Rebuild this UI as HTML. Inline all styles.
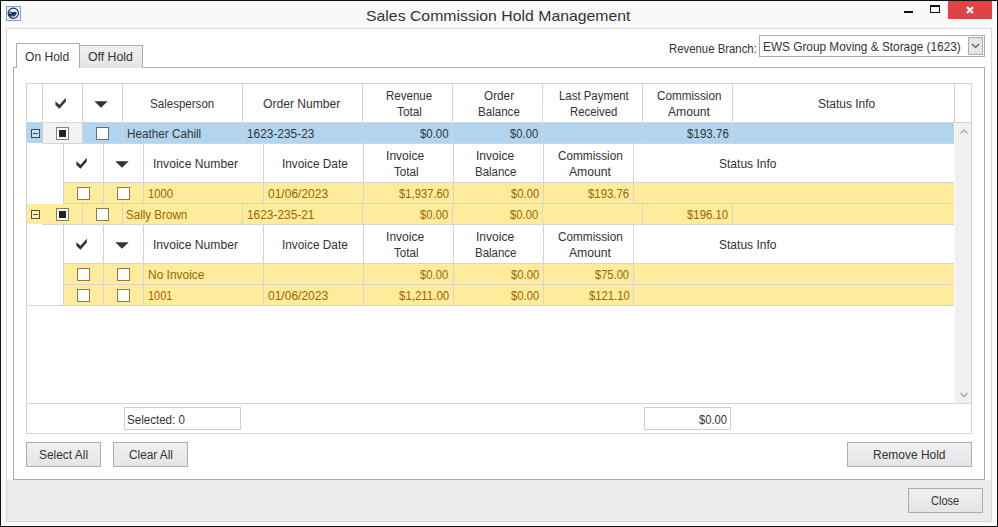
<!DOCTYPE html><html><head><meta charset="utf-8"><style>
html,body{margin:0;padding:0;} body{width:998px;height:527px;position:relative;overflow:hidden;background:#f9f9f9;font-family:"Liberation Sans", sans-serif;font-size:12px;color:#333;}
div{box-sizing:border-box;}
</style></head><body>
<div style="position:absolute;left:0px;top:0px;width:998px;height:527px;border:1px solid #111;"></div>
<svg style="position:absolute;left:6px;top:6px" width="15" height="15" viewBox="0 0 15 15"><rect x="0.5" y="0.5" width="14" height="14" fill="#e9eef5" stroke="#8aa0bd"/><circle cx="7.3" cy="7.3" r="5.2" fill="#eef2f8" stroke="#143666" stroke-width="1.1"/><path d="M2.9 5.8 L5.2 5.6 L6.2 6.2 L9 5.8 L10.5 6.3 L10.7 7.7 L9.4 9 L9 10.1 L7.5 11.3 L4.8 11.9 L2.9 10.1 L2.2 7.9 Z" fill="#143666"/><path d="M3.1 7.1 L5.6 7.1 M4.6 10.3 L7.9 10.3" stroke="#e9eef5" stroke-width="0.8"/></svg>
<div style="position:absolute;left:366.45px;top:5.5px;line-height:20px;white-space:nowrap;font-size:15px;transform:scaleX(1.0540);transform-origin:0 0;color:#333">Sales Commission Hold Management</div>
<div style="position:absolute;left:904px;top:11px;width:9px;height:2px;background:#111"></div>
<div style="position:absolute;left:930px;top:5px;width:10px;height:8px;border:1px solid #111;border-top-width:2px"></div>
<div style="position:absolute;left:948px;top:1px;width:44px;height:18px;background:#e04343"></div>
<svg style="position:absolute;left:965px;top:5px" width="10" height="10" viewBox="0 0 10 10"><path d="M2 2 L8 8 M8 2 L2 8" stroke="#fff" stroke-width="2.2"/></svg>
<div style="position:absolute;left:6px;top:28px;width:986px;height:494px;border:1px solid #d9d9d9;background:#ececec"></div>
<div style="position:absolute;left:7px;top:29px;width:984px;height:451px;background:#fff"></div>
<div style="position:absolute;left:13px;top:67px;width:972px;height:413px;border:1px solid #acacac;background:#fff"></div>
<div style="position:absolute;left:79px;top:45px;width:64px;height:23px;border:1px solid #acacac;border-bottom:none;background:linear-gradient(#f0f0f0,#e5e5e5)"></div>
<div style="position:absolute;left:16px;top:43px;width:64px;height:25px;border:1px solid #acacac;border-bottom:none;background:#fff"></div>
<div style="position:absolute;left:25.20px;top:49px;line-height:16px;white-space:nowrap;font-size:12px;transform:scaleX(1.0045);transform-origin:0 0;color:#333">On Hold</div>
<div style="position:absolute;left:88.10px;top:49px;line-height:16px;white-space:nowrap;font-size:12px;transform:scaleX(1.0250);transform-origin:0 0;color:#333">Off Hold</div>
<div style="position:absolute;left:668.65px;top:41px;line-height:16px;white-space:nowrap;font-size:12px;transform:scaleX(0.9473);transform-origin:0 0;color:#333">Revenue Branch:</div>
<div style="position:absolute;left:759px;top:35px;width:226px;height:22px;border:1px solid #acacac;background:#fff"></div>
<div style="position:absolute;left:763.22px;top:39px;line-height:16px;white-space:nowrap;font-size:12px;transform:scaleX(0.9849);transform-origin:0 0;color:#333">EWS Group Moving &amp; Storage (1623)</div>
<div style="position:absolute;left:968px;top:37px;width:15px;height:18px;border:1px solid #acacac;background:#e6e6e6"></div>
<svg style="position:absolute;left:968px;top:37px" width="15" height="18" viewBox="0 0 15 18"><path d="M4 7 L7.5 10.5 L11 7" stroke="#555" stroke-width="1.2" fill="none"/></svg>
<div style="position:absolute;left:26px;top:83px;width:946px;height:351px;border:1px solid #d5d5d5;background:#fff"></div>
<div style="position:absolute;left:27px;top:122px;width:944px;height:1px;background:#d5d5d5"></div>
<div style="position:absolute;left:42px;top:84px;width:1px;height:38px;background:#d5d5d5"></div>
<div style="position:absolute;left:82px;top:84px;width:1px;height:38px;background:#d5d5d5"></div>
<div style="position:absolute;left:122px;top:84px;width:1px;height:38px;background:#d5d5d5"></div>
<div style="position:absolute;left:242px;top:84px;width:1px;height:38px;background:#d5d5d5"></div>
<div style="position:absolute;left:362px;top:84px;width:1px;height:38px;background:#d5d5d5"></div>
<div style="position:absolute;left:452px;top:84px;width:1px;height:38px;background:#d5d5d5"></div>
<div style="position:absolute;left:542px;top:84px;width:1px;height:38px;background:#d5d5d5"></div>
<div style="position:absolute;left:642px;top:84px;width:1px;height:38px;background:#d5d5d5"></div>
<div style="position:absolute;left:732px;top:84px;width:1px;height:38px;background:#d5d5d5"></div>
<div style="position:absolute;left:954px;top:84px;width:1px;height:38px;background:#d5d5d5"></div>
<svg style="position:absolute;left:55px;top:97px" width="12" height="12" viewBox="0 0 12 12"><path d="M0.4 4.2 L4.5 7.7 L10.8 0.7 L10.8 4.6 L4.5 11.7 L0.4 8.1 Z" fill="#333"/></svg>
<svg style="position:absolute;left:94px;top:101px" width="14" height="8" viewBox="0 0 14 8"><path d="M0.3 0.2 L13.7 0.2 L7 6.8 Z" fill="#333"/></svg>
<div style="position:absolute;left:149.64px;top:96px;line-height:16px;white-space:nowrap;font-size:12px;transform:scaleX(0.9631);transform-origin:0 0;color:#333">Salesperson</div>
<div style="position:absolute;left:263.30px;top:96px;line-height:16px;white-space:nowrap;font-size:12px;transform:scaleX(1.0078);transform-origin:0 0;color:#333">Order Number</div>
<div style="position:absolute;left:386.14px;top:88px;line-height:16px;white-space:nowrap;font-size:12px;transform:scaleX(0.9596);transform-origin:0 0;color:#333">Revenue</div>
<div style="position:absolute;left:397.10px;top:104px;line-height:16px;white-space:nowrap;font-size:12px;transform:scaleX(0.9840);transform-origin:0 0;color:#333">Total</div>
<div style="position:absolute;left:484.30px;top:88px;line-height:16px;white-space:nowrap;font-size:12px;transform:scaleX(0.9806);transform-origin:0 0;color:#333">Order</div>
<div style="position:absolute;left:478.24px;top:104px;line-height:16px;white-space:nowrap;font-size:12px;transform:scaleX(0.9643);transform-origin:0 0;color:#333">Balance</div>
<div style="position:absolute;left:559.05px;top:88px;line-height:16px;white-space:nowrap;font-size:12px;transform:scaleX(0.9507);transform-origin:0 0;color:#333">Last Payment</div>
<div style="position:absolute;left:570.35px;top:104px;line-height:16px;white-space:nowrap;font-size:12px;transform:scaleX(0.9469);transform-origin:0 0;color:#333">Received</div>
<div style="position:absolute;left:657.20px;top:88px;line-height:16px;white-space:nowrap;font-size:12px;transform:scaleX(0.9758);transform-origin:0 0;color:#333">Commission</div>
<div style="position:absolute;left:668.30px;top:104px;line-height:16px;white-space:nowrap;font-size:12px;transform:scaleX(1.0119);transform-origin:0 0;color:#333">Amount</div>
<div style="position:absolute;left:817.90px;top:96px;line-height:16px;white-space:nowrap;font-size:12px;transform:scaleX(0.9982);transform-origin:0 0;color:#333">Status Info</div>
<div style="position:absolute;left:955px;top:123px;width:16px;height:280px;background:#f0f0f0"></div>
<svg style="position:absolute;left:955.5px;top:123px" width="16" height="16" viewBox="0 0 16 16"><path d="M4.5 10.5 L8 7 L11.5 10.5" stroke="#a6a6a6" stroke-width="1.3" fill="none"/></svg>
<svg style="position:absolute;left:955.5px;top:387px" width="16" height="16" viewBox="0 0 16 16"><path d="M4.5 6 L8 9.5 L11.5 6" stroke="#a6a6a6" stroke-width="1.3" fill="none"/></svg>
<div style="position:absolute;left:27px;top:123px;width:927px;height:20px;background:#b2d5ef"></div>
<div style="position:absolute;left:43px;top:123px;width:39px;height:20px;background:#f2f2f2"></div>
<div style="position:absolute;left:42px;top:143px;width:912px;height:1px;background:#d5d5d5"></div>
<div style="position:absolute;left:82px;top:123px;width:1px;height:20px;background:#d5d5d5"></div>
<div style="position:absolute;left:122px;top:123px;width:1px;height:20px;background:#d5d5d5"></div>
<div style="position:absolute;left:242px;top:123px;width:1px;height:20px;background:#d5d5d5"></div>
<div style="position:absolute;left:362px;top:123px;width:1px;height:20px;background:#d5d5d5"></div>
<div style="position:absolute;left:452px;top:123px;width:1px;height:20px;background:#d5d5d5"></div>
<div style="position:absolute;left:542px;top:123px;width:1px;height:20px;background:#d5d5d5"></div>
<div style="position:absolute;left:642px;top:123px;width:1px;height:20px;background:#d5d5d5"></div>
<div style="position:absolute;left:732px;top:123px;width:1px;height:20px;background:#d5d5d5"></div>
<div style="position:absolute;left:31px;top:129px;width:9px;height:9px;border:1px solid rgba(0,0,0,0.66);background:rgba(255,255,255,0.3);background-clip:padding-box"></div>
<div style="position:absolute;left:33px;top:133px;width:5px;height:1px;background:rgba(0,0,0,0.66)"></div>
<div style="position:absolute;left:56px;top:127px;width:13px;height:13px;border:1px solid rgba(0,0,0,0.47);background:#fff;background-clip:padding-box"></div>
<div style="position:absolute;left:59px;top:130px;width:7px;height:7px;background:#222"></div>
<div style="position:absolute;left:96px;top:127px;width:13px;height:13px;border:1px solid rgba(0,0,0,0.47);background:#fff;background-clip:padding-box"></div>
<div style="position:absolute;left:126.52px;top:126px;line-height:16px;white-space:nowrap;font-size:12px;transform:scaleX(0.9760);transform-origin:0 0;color:#333">Heather Cahill</div>
<div style="position:absolute;left:246.81px;top:126px;line-height:16px;white-space:nowrap;font-size:12px;transform:scaleX(0.9896);transform-origin:0 0;color:#333">1623-235-23</div>
<div style="position:absolute;left:419.80px;top:126px;line-height:16px;white-space:nowrap;font-size:12px;transform:scaleX(0.9500);transform-origin:0 0;color:#333">$0.00</div>
<div style="position:absolute;left:509.70px;top:126px;line-height:16px;white-space:nowrap;font-size:12px;transform:scaleX(0.9367);transform-origin:0 0;color:#333">$0.00</div>
<div style="position:absolute;left:686.70px;top:126px;line-height:16px;white-space:nowrap;font-size:12px;transform:scaleX(0.9651);transform-origin:0 0;color:#333">$193.76</div>
<div style="position:absolute;left:63px;top:144px;width:1px;height:38px;background:#c9d3e3"></div>
<div style="position:absolute;left:63px;top:182px;width:891px;height:1px;background:#d5d5d5"></div>
<div style="position:absolute;left:103px;top:144px;width:1px;height:38px;background:#d5d5d5"></div>
<div style="position:absolute;left:143px;top:144px;width:1px;height:38px;background:#d5d5d5"></div>
<div style="position:absolute;left:263px;top:144px;width:1px;height:38px;background:#d5d5d5"></div>
<div style="position:absolute;left:363px;top:144px;width:1px;height:38px;background:#d5d5d5"></div>
<div style="position:absolute;left:453px;top:144px;width:1px;height:38px;background:#d5d5d5"></div>
<div style="position:absolute;left:543px;top:144px;width:1px;height:38px;background:#d5d5d5"></div>
<div style="position:absolute;left:633px;top:144px;width:1px;height:38px;background:#d5d5d5"></div>
<svg style="position:absolute;left:76px;top:157px" width="12" height="12" viewBox="0 0 12 12"><path d="M0.4 4.2 L4.5 7.7 L10.8 0.7 L10.8 4.6 L4.5 11.7 L0.4 8.1 Z" fill="#333"/></svg>
<svg style="position:absolute;left:115px;top:161px" width="14" height="8" viewBox="0 0 14 8"><path d="M0.3 0.2 L13.7 0.2 L7 6.8 Z" fill="#333"/></svg>
<div style="position:absolute;left:152.79px;top:156px;line-height:16px;white-space:nowrap;font-size:12px;transform:scaleX(1.0108);transform-origin:0 0;color:#333">Invoice Number</div>
<div style="position:absolute;left:281.81px;top:156px;line-height:16px;white-space:nowrap;font-size:12px;transform:scaleX(0.9864);transform-origin:0 0;color:#333">Invoice Date</div>
<div style="position:absolute;left:386.10px;top:148px;line-height:16px;white-space:nowrap;font-size:12px;transform:scaleX(1.0000);transform-origin:0 0;color:#333">Invoice</div>
<div style="position:absolute;left:393.80px;top:164px;line-height:16px;white-space:nowrap;font-size:12px;transform:scaleX(0.9720);transform-origin:0 0;color:#333">Total</div>
<div style="position:absolute;left:476.00px;top:148px;line-height:16px;white-space:nowrap;font-size:12px;transform:scaleX(1.0027);transform-origin:0 0;color:#333">Invoice</div>
<div style="position:absolute;left:474.75px;top:164px;line-height:16px;white-space:nowrap;font-size:12px;transform:scaleX(0.9548);transform-origin:0 0;color:#333">Balance</div>
<div style="position:absolute;left:558.00px;top:148px;line-height:16px;white-space:nowrap;font-size:12px;transform:scaleX(0.9803);transform-origin:0 0;color:#333">Commission</div>
<div style="position:absolute;left:569.30px;top:164px;line-height:16px;white-space:nowrap;font-size:12px;transform:scaleX(1.0143);transform-origin:0 0;color:#333">Amount</div>
<div style="position:absolute;left:718.90px;top:156px;line-height:16px;white-space:nowrap;font-size:12px;transform:scaleX(1.0018);transform-origin:0 0;color:#333">Status Info</div>
<div style="position:absolute;left:63px;top:183px;width:1px;height:21px;background:#c9d3e3"></div>
<div style="position:absolute;left:64px;top:183px;width:890px;height:20px;background:#ffeb9c"></div>
<div style="position:absolute;left:64px;top:203px;width:890px;height:1px;background:#d5d5d5"></div>
<div style="position:absolute;left:103px;top:183px;width:1px;height:20px;background:#d5d5d5"></div>
<div style="position:absolute;left:143px;top:183px;width:1px;height:20px;background:#d5d5d5"></div>
<div style="position:absolute;left:263px;top:183px;width:1px;height:20px;background:#d5d5d5"></div>
<div style="position:absolute;left:363px;top:183px;width:1px;height:20px;background:#d5d5d5"></div>
<div style="position:absolute;left:453px;top:183px;width:1px;height:20px;background:#d5d5d5"></div>
<div style="position:absolute;left:543px;top:183px;width:1px;height:20px;background:#d5d5d5"></div>
<div style="position:absolute;left:633px;top:183px;width:1px;height:20px;background:#d5d5d5"></div>
<div style="position:absolute;left:77px;top:187px;width:13px;height:13px;border:1px solid rgba(0,0,0,0.47);background:#fff;background-clip:padding-box"></div>
<div style="position:absolute;left:117px;top:187px;width:13px;height:13px;border:1px solid rgba(0,0,0,0.47);background:#fff;background-clip:padding-box"></div>
<div style="position:absolute;left:147.86px;top:186px;line-height:16px;white-space:nowrap;font-size:12px;transform:scaleX(0.9423);transform-origin:0 0;color:#9c6500">1000</div>
<div style="position:absolute;left:268.30px;top:186px;line-height:16px;white-space:nowrap;font-size:12px;transform:scaleX(1.0017);transform-origin:0 0;color:#9c6500">01/06/2023</div>
<div style="position:absolute;left:398.80px;top:186px;line-height:16px;white-space:nowrap;font-size:12px;transform:scaleX(0.9377);transform-origin:0 0;color:#9c6500">$1,937.60</div>
<div style="position:absolute;left:510.60px;top:186px;line-height:16px;white-space:nowrap;font-size:12px;transform:scaleX(0.9367);transform-origin:0 0;color:#9c6500">$0.00</div>
<div style="position:absolute;left:588.20px;top:186px;line-height:16px;white-space:nowrap;font-size:12px;transform:scaleX(0.9465);transform-origin:0 0;color:#9c6500">$193.76</div>
<div style="position:absolute;left:27px;top:204px;width:927px;height:20px;background:#ffeb9c"></div>
<div style="position:absolute;left:42px;top:224px;width:912px;height:1px;background:#d5d5d5"></div>
<div style="position:absolute;left:82px;top:204px;width:1px;height:20px;background:#d5d5d5"></div>
<div style="position:absolute;left:122px;top:204px;width:1px;height:20px;background:#d5d5d5"></div>
<div style="position:absolute;left:242px;top:204px;width:1px;height:20px;background:#d5d5d5"></div>
<div style="position:absolute;left:362px;top:204px;width:1px;height:20px;background:#d5d5d5"></div>
<div style="position:absolute;left:452px;top:204px;width:1px;height:20px;background:#d5d5d5"></div>
<div style="position:absolute;left:542px;top:204px;width:1px;height:20px;background:#d5d5d5"></div>
<div style="position:absolute;left:642px;top:204px;width:1px;height:20px;background:#d5d5d5"></div>
<div style="position:absolute;left:732px;top:204px;width:1px;height:20px;background:#d5d5d5"></div>
<div style="position:absolute;left:31px;top:210px;width:9px;height:9px;border:1px solid rgba(0,0,0,0.66);background:rgba(255,255,255,0.3);background-clip:padding-box"></div>
<div style="position:absolute;left:33px;top:214px;width:5px;height:1px;background:rgba(0,0,0,0.66)"></div>
<div style="position:absolute;left:56px;top:208px;width:13px;height:13px;border:1px solid rgba(0,0,0,0.47);background:#fff;background-clip:padding-box"></div>
<div style="position:absolute;left:59px;top:211px;width:7px;height:7px;background:#222"></div>
<div style="position:absolute;left:96px;top:208px;width:13px;height:13px;border:1px solid rgba(0,0,0,0.47);background:#fff;background-clip:padding-box"></div>
<div style="position:absolute;left:126.23px;top:207px;line-height:16px;white-space:nowrap;font-size:12px;transform:scaleX(0.9661);transform-origin:0 0;color:#9c6500">Sally Brown</div>
<div style="position:absolute;left:246.71px;top:207px;line-height:16px;white-space:nowrap;font-size:12px;transform:scaleX(0.9910);transform-origin:0 0;color:#9c6500">1623-235-21</div>
<div style="position:absolute;left:419.70px;top:207px;line-height:16px;white-space:nowrap;font-size:12px;transform:scaleX(0.9367);transform-origin:0 0;color:#9c6500">$0.00</div>
<div style="position:absolute;left:509.90px;top:207px;line-height:16px;white-space:nowrap;font-size:12px;transform:scaleX(0.9433);transform-origin:0 0;color:#9c6500">$0.00</div>
<div style="position:absolute;left:687.40px;top:207px;line-height:16px;white-space:nowrap;font-size:12px;transform:scaleX(0.9465);transform-origin:0 0;color:#9c6500">$196.10</div>
<div style="position:absolute;left:63px;top:225px;width:1px;height:38px;background:#c9d3e3"></div>
<div style="position:absolute;left:63px;top:263px;width:891px;height:1px;background:#d5d5d5"></div>
<div style="position:absolute;left:103px;top:225px;width:1px;height:38px;background:#d5d5d5"></div>
<div style="position:absolute;left:143px;top:225px;width:1px;height:38px;background:#d5d5d5"></div>
<div style="position:absolute;left:263px;top:225px;width:1px;height:38px;background:#d5d5d5"></div>
<div style="position:absolute;left:363px;top:225px;width:1px;height:38px;background:#d5d5d5"></div>
<div style="position:absolute;left:453px;top:225px;width:1px;height:38px;background:#d5d5d5"></div>
<div style="position:absolute;left:543px;top:225px;width:1px;height:38px;background:#d5d5d5"></div>
<div style="position:absolute;left:633px;top:225px;width:1px;height:38px;background:#d5d5d5"></div>
<svg style="position:absolute;left:76px;top:238px" width="12" height="12" viewBox="0 0 12 12"><path d="M0.4 4.2 L4.5 7.7 L10.8 0.7 L10.8 4.6 L4.5 11.7 L0.4 8.1 Z" fill="#333"/></svg>
<svg style="position:absolute;left:115px;top:242px" width="14" height="8" viewBox="0 0 14 8"><path d="M0.3 0.2 L13.7 0.2 L7 6.8 Z" fill="#333"/></svg>
<div style="position:absolute;left:152.79px;top:237px;line-height:16px;white-space:nowrap;font-size:12px;transform:scaleX(1.0108);transform-origin:0 0;color:#333">Invoice Number</div>
<div style="position:absolute;left:281.81px;top:237px;line-height:16px;white-space:nowrap;font-size:12px;transform:scaleX(0.9864);transform-origin:0 0;color:#333">Invoice Date</div>
<div style="position:absolute;left:386.10px;top:229px;line-height:16px;white-space:nowrap;font-size:12px;transform:scaleX(1.0000);transform-origin:0 0;color:#333">Invoice</div>
<div style="position:absolute;left:393.80px;top:245px;line-height:16px;white-space:nowrap;font-size:12px;transform:scaleX(0.9720);transform-origin:0 0;color:#333">Total</div>
<div style="position:absolute;left:476.00px;top:229px;line-height:16px;white-space:nowrap;font-size:12px;transform:scaleX(1.0027);transform-origin:0 0;color:#333">Invoice</div>
<div style="position:absolute;left:474.75px;top:245px;line-height:16px;white-space:nowrap;font-size:12px;transform:scaleX(0.9548);transform-origin:0 0;color:#333">Balance</div>
<div style="position:absolute;left:558.00px;top:229px;line-height:16px;white-space:nowrap;font-size:12px;transform:scaleX(0.9803);transform-origin:0 0;color:#333">Commission</div>
<div style="position:absolute;left:569.30px;top:245px;line-height:16px;white-space:nowrap;font-size:12px;transform:scaleX(1.0143);transform-origin:0 0;color:#333">Amount</div>
<div style="position:absolute;left:718.90px;top:237px;line-height:16px;white-space:nowrap;font-size:12px;transform:scaleX(1.0018);transform-origin:0 0;color:#333">Status Info</div>
<div style="position:absolute;left:63px;top:264px;width:1px;height:21px;background:#c9d3e3"></div>
<div style="position:absolute;left:64px;top:264px;width:890px;height:20px;background:#ffeb9c"></div>
<div style="position:absolute;left:64px;top:284px;width:890px;height:1px;background:#d5d5d5"></div>
<div style="position:absolute;left:103px;top:264px;width:1px;height:20px;background:#d5d5d5"></div>
<div style="position:absolute;left:143px;top:264px;width:1px;height:20px;background:#d5d5d5"></div>
<div style="position:absolute;left:263px;top:264px;width:1px;height:20px;background:#d5d5d5"></div>
<div style="position:absolute;left:363px;top:264px;width:1px;height:20px;background:#d5d5d5"></div>
<div style="position:absolute;left:453px;top:264px;width:1px;height:20px;background:#d5d5d5"></div>
<div style="position:absolute;left:543px;top:264px;width:1px;height:20px;background:#d5d5d5"></div>
<div style="position:absolute;left:633px;top:264px;width:1px;height:20px;background:#d5d5d5"></div>
<div style="position:absolute;left:77px;top:268px;width:13px;height:13px;border:1px solid rgba(0,0,0,0.47);background:#fff;background-clip:padding-box"></div>
<div style="position:absolute;left:117px;top:268px;width:13px;height:13px;border:1px solid rgba(0,0,0,0.47);background:#fff;background-clip:padding-box"></div>
<div style="position:absolute;left:147.80px;top:267px;line-height:16px;white-space:nowrap;font-size:12px;transform:scaleX(0.9964);transform-origin:0 0;color:#9c6500">No Invoice</div>
<div style="position:absolute;left:420.40px;top:267px;line-height:16px;white-space:nowrap;font-size:12px;transform:scaleX(0.9367);transform-origin:0 0;color:#9c6500">$0.00</div>
<div style="position:absolute;left:510.60px;top:267px;line-height:16px;white-space:nowrap;font-size:12px;transform:scaleX(0.9367);transform-origin:0 0;color:#9c6500">$0.00</div>
<div style="position:absolute;left:594.60px;top:267px;line-height:16px;white-space:nowrap;font-size:12px;transform:scaleX(0.9270);transform-origin:0 0;color:#9c6500">$75.00</div>
<div style="position:absolute;left:63px;top:285px;width:1px;height:21px;background:#c9d3e3"></div>
<div style="position:absolute;left:64px;top:285px;width:890px;height:20px;background:#ffeb9c"></div>
<div style="position:absolute;left:64px;top:305px;width:890px;height:1px;background:#d5d5d5"></div>
<div style="position:absolute;left:103px;top:285px;width:1px;height:20px;background:#d5d5d5"></div>
<div style="position:absolute;left:143px;top:285px;width:1px;height:20px;background:#d5d5d5"></div>
<div style="position:absolute;left:263px;top:285px;width:1px;height:20px;background:#d5d5d5"></div>
<div style="position:absolute;left:363px;top:285px;width:1px;height:20px;background:#d5d5d5"></div>
<div style="position:absolute;left:453px;top:285px;width:1px;height:20px;background:#d5d5d5"></div>
<div style="position:absolute;left:543px;top:285px;width:1px;height:20px;background:#d5d5d5"></div>
<div style="position:absolute;left:633px;top:285px;width:1px;height:20px;background:#d5d5d5"></div>
<div style="position:absolute;left:77px;top:289px;width:13px;height:13px;border:1px solid rgba(0,0,0,0.47);background:#fff;background-clip:padding-box"></div>
<div style="position:absolute;left:117px;top:289px;width:13px;height:13px;border:1px solid rgba(0,0,0,0.47);background:#fff;background-clip:padding-box"></div>
<div style="position:absolute;left:147.88px;top:288px;line-height:16px;white-space:nowrap;font-size:12px;transform:scaleX(0.9154);transform-origin:0 0;color:#9c6500">1001</div>
<div style="position:absolute;left:268.30px;top:288px;line-height:16px;white-space:nowrap;font-size:12px;transform:scaleX(1.0017);transform-origin:0 0;color:#9c6500">01/06/2023</div>
<div style="position:absolute;left:398.80px;top:288px;line-height:16px;white-space:nowrap;font-size:12px;transform:scaleX(0.9558);transform-origin:0 0;color:#9c6500">$1,211.00</div>
<div style="position:absolute;left:510.60px;top:288px;line-height:16px;white-space:nowrap;font-size:12px;transform:scaleX(0.9367);transform-origin:0 0;color:#9c6500">$0.00</div>
<div style="position:absolute;left:588.50px;top:288px;line-height:16px;white-space:nowrap;font-size:12px;transform:scaleX(0.9395);transform-origin:0 0;color:#9c6500">$121.10</div>
<div style="position:absolute;left:27px;top:305px;width:927px;height:1px;background:#d5d5d5"></div>
<div style="position:absolute;left:27px;top:403px;width:944px;height:1px;background:#d5d5d5"></div>
<div style="position:absolute;left:124px;top:407px;width:117px;height:23px;border:1px solid #cfcfcf;background:#fff"></div>
<div style="position:absolute;left:127.34px;top:412px;line-height:16px;white-space:nowrap;font-size:12px;transform:scaleX(0.9644);transform-origin:0 0;color:#333">Selected: 0</div>
<div style="position:absolute;left:644px;top:407px;width:87px;height:23px;border:1px solid #cfcfcf;background:#fff"></div>
<div style="position:absolute;left:698.80px;top:412px;line-height:16px;white-space:nowrap;font-size:12px;transform:scaleX(0.9333);transform-origin:0 0;color:#333">$0.00</div>
<div style="position:absolute;left:26px;top:442px;width:75px;height:25px;border:1px solid #adadad;background:linear-gradient(#f0f0f0,#e5e5e5)"></div>
<div style="position:absolute;left:38.61px;top:447px;line-height:16px;white-space:nowrap;font-size:12px;transform:scaleX(0.9937);transform-origin:0 0;color:#333">Select All</div>
<div style="position:absolute;left:113px;top:442px;width:75px;height:25px;border:1px solid #adadad;background:linear-gradient(#f0f0f0,#e5e5e5)"></div>
<div style="position:absolute;left:128.80px;top:447px;line-height:16px;white-space:nowrap;font-size:12px;transform:scaleX(0.9841);transform-origin:0 0;color:#333">Clear All</div>
<div style="position:absolute;left:847px;top:442px;width:125px;height:25px;border:1px solid #adadad;background:linear-gradient(#f0f0f0,#e5e5e5)"></div>
<div style="position:absolute;left:873.20px;top:447px;line-height:16px;white-space:nowrap;font-size:12px;transform:scaleX(0.9972);transform-origin:0 0;color:#333">Remove Hold</div>
<div style="position:absolute;left:908px;top:488px;width:75px;height:25px;border:1px solid #adadad;background:linear-gradient(#f0f0f0,#e5e5e5)"></div>
<div style="position:absolute;left:931.20px;top:493px;line-height:16px;white-space:nowrap;font-size:12px;transform:scaleX(0.9194);transform-origin:0 0;color:#333">Close</div>
</body></html>
